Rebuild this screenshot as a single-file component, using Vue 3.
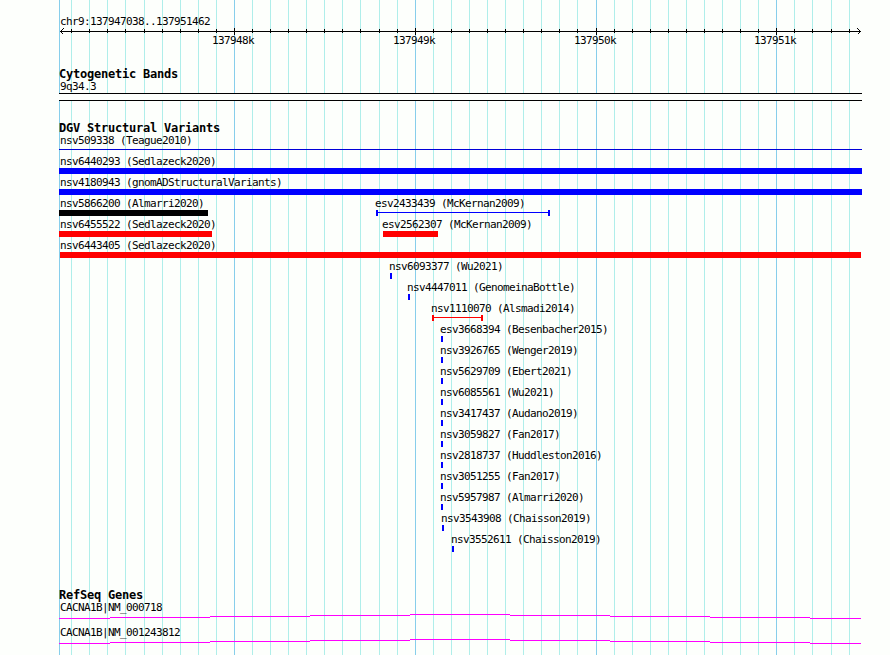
<script setup>
  import { computed } from 'vue'

  const region = 'chr9:137947038..137951462'

  // a grid line every 100 bp, the major ones fall on the 1k positions
  const gridLines = computed(() => {
    const lines = [{ x: 59, major: true, edge: true }]
    for (let i = 0; i < 44; i++) {
      lines.push({ x: Math.floor(71.745 + i * 18.078), major: i % 10 === 9, edge: false })
    }
    return lines
  })
  const ticks = computed(() => gridLines.value.filter(l => !l.edge))
  const majorTicks = computed(() =>
    ticks.value.filter(t => t.major).map((t, i) => ({ x: t.x, label: `${137948 + i}k` }))
  )

  const stacked = [
    'esv3668394 (Besenbacher2015)',
    'nsv3926765 (Wenger2019)',
    'nsv5629709 (Ebert2021)',
    'nsv6085561 (Wu2021)',
    'nsv3417437 (Audano2019)',
    'nsv3059827 (Fan2017)',
    'nsv2818737 (Huddleston2016)',
    'nsv3051255 (Fan2017)',
    'nsv5957987 (Almarri2020)'
  ]

  const variantRows = [
    [{ name: 'nsv509338 (Teague2010)', at: 60, x: 59, w: 803, kind: 'thin', color: 'blue' }],
    [{ name: 'nsv6440293 (Sedlazeck2020)', at: 60, x: 59, w: 803, kind: 'bar', color: 'blue' }],
    [{ name: 'nsv4180943 (gnomADStructuralVariants)', at: 60, x: 59, w: 803, kind: 'bar', color: 'blue' }],
    [
      { name: 'nsv5866200 (Almarri2020)', at: 60, x: 59, w: 149, kind: 'bar', color: 'black' },
      { name: 'esv2433439 (McKernan2009)', at: 375, x: 376, w: 174, kind: 'span', color: 'blue' }
    ],
    [
      { name: 'nsv6455522 (Sedlazeck2020)', at: 60, x: 59, w: 153, kind: 'bar', color: 'red' },
      { name: 'esv2562307 (McKernan2009)', at: 382, x: 383, w: 55, kind: 'bar', color: 'red' }
    ],
    [{ name: 'nsv6443405 (Sedlazeck2020)', at: 60, x: 60, w: 801, kind: 'bar', color: 'red' }],
    [{ name: 'nsv6093377 (Wu2021)', at: 389, x: 390, w: 2, kind: 'bar', color: 'blue' }],
    [{ name: 'nsv4447011 (GenomeinaBottle)', at: 407, x: 408, w: 2, kind: 'bar', color: 'blue' }],
    [{ name: 'nsv1110070 (Alsmadi2014)', at: 431, x: 432, w: 51, kind: 'span', color: 'red' }],
    ...stacked.map(name => [{ name, at: 440, x: 441, w: 2, kind: 'bar', color: 'blue' }]),
    [{ name: 'nsv3543908 (Chaisson2019)', at: 441, x: 442, w: 2, kind: 'bar', color: 'blue' }],
    [{ name: 'nsv3552611 (Chaisson2019)', at: 451, x: 452, w: 2, kind: 'bar', color: 'blue' }]
  ]

  const genes = ['CACNA1B|NM_000718', 'CACNA1B|NM_001243812']

  // introns are drawn as a shallow arch, one pixel per step
  const intronSteps = [
    [59, 110, 4], [110, 210, 3], [210, 310, 2], [310, 410, 1], [410, 510, 0],
    [510, 610, 1], [610, 710, 2], [710, 810, 3], [810, 861, 4]
  ]
</script>

<template>
  <div class="browser">
    <svg class="grid" width="890" height="655" shape-rendering="crispEdges">
      <rect
        v-for="line in gridLines" :key="line.x"
        :x="line.x" y="0" width="1" height="655"
        :class="line.major ? 'grid-major' : 'grid-minor'"
      />
    </svg>

    <header class="ruler">
      <div class="label region">{{ region }}</div>
      <svg class="axis" width="890" height="7" shape-rendering="crispEdges">
        <rect x="60" y="3" width="801" height="1" />
        <rect
          v-for="t in ticks" :key="t.x"
          :x="t.x" :y="t.major ? 0 : 1" width="1" :height="t.major ? 7 : 4"
        />
        <path class="arrow" d="M63.5 0.5L60.5 3.5L63.5 6.5M857.5 0.5L860.5 3.5L857.5 6.5" />
      </svg>
      <div class="axis-labels">
        <span v-for="t in majorTicks" :key="t.x" class="label placed" :style="{ left: t.x - 22 + 'px' }">{{ t.label }}</span>
      </div>
    </header>

    <section class="track cytobands">
      <h2>Cytogenetic Bands</h2>
      <div class="label region">9q34.3</div>
      <div class="band"></div>
    </section>

    <section class="track variants">
      <h2>DGV Structural Variants</h2>
      <div v-for="(row, i) in variantRows" :key="i" class="row">
        <template v-for="v in row" :key="v.name">
          <span class="label placed" :style="{ left: v.at + 'px' }">{{ v.name }}</span>
          <i :class="['glyph', v.kind, v.color]" :style="{ left: v.x + 'px', width: v.w + 'px' }"></i>
        </template>
      </div>
    </section>

    <section class="track genes">
      <h2>RefSeq Genes</h2>
      <div v-for="gene in genes" :key="gene" class="gene">
        <div class="label region">{{ gene }}</div>
        <svg width="890" height="5" shape-rendering="crispEdges">
          <rect v-for="s in intronSteps" :key="s[0]" :x="s[0]" :y="s[2]" :width="s[1] - s[0]" height="1" />
        </svg>
      </div>
    </section>
  </div>
</template>

<style>
  body {
    margin: 0;
    background: #fdfffc;
  }
</style>

<style scoped>
  .browser {
    position: relative;
    width: 890px;
    height: 655px;
    overflow: hidden;
    color: #000;
    background: #fdfffc;
    font-family: "DejaVu Sans Mono", monospace;
    font-size: 11px;
    line-height: 14px;
  }

  svg {
    display: block;
  }

  .grid {
    position: absolute;
    top: 0;
    left: 0;
  }

  .grid-minor { fill: #afeeea; }
  .grid-major { fill: #87ceeb; }

  .ruler, .track {
    position: relative;
  }

  .ruler {
    height: 68px;
    padding-top: 15px;
    box-sizing: border-box;
  }

  .label {
    height: 12px;
    letter-spacing: -0.622px;
    white-space: pre;
  }

  .region {
    padding-left: 60px;
  }

  .placed {
    position: absolute;
    top: 0;
  }

  .axis {
    margin-top: 1px;
  }

  .arrow {
    fill: none;
    stroke: #000;
  }

  .axis-labels {
    position: relative;
    height: 12px;
    margin-top: -1px;
  }

  h2 {
    height: 12px;
    margin: 0;
    padding-left: 59px;
    font-size: 12px;
    font-weight: bold;
    letter-spacing: -0.224px;
    line-height: 13px;
  }

  .cytobands {
    height: 54px;
  }

  .band {
    width: 803px;
    height: 8px;
    margin: 1px 0 0 59px;
    box-sizing: border-box;
    border: solid #000;
    border-width: 1px 0;
    background: #fdfffc;
  }

  .variants {
    height: 467px;
  }

  .row {
    position: relative;
    height: 21px;
  }

  .glyph {
    position: absolute;
    top: 13px;
    height: 6px;
    box-sizing: border-box;
    background: currentColor;
  }

  .blue { color: #00f; }
  .red { color: #f00; }
  .black { color: #000; }

  .thin {
    top: 15px;
    height: 1px;
    color: #0000d8;
  }

  /* end caps joined by a hairline */
  .span {
    border: solid currentColor;
    border-width: 0 2px;
    background: linear-gradient(currentColor, currentColor) 0 2px / 100% 1px no-repeat;
  }

  .gene {
    height: 25px;
  }

  .gene svg {
    margin-top: 1px;
    fill: #f0f;
  }
</style>
